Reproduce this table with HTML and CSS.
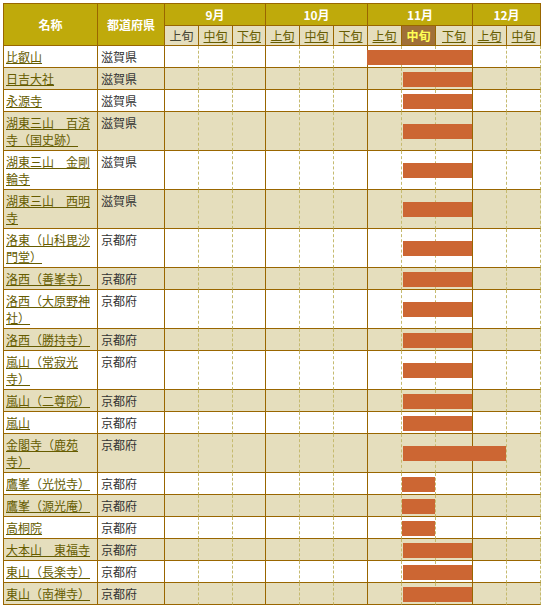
FILE: index.html
```html
<!DOCTYPE html>
<html lang="ja">
<head>
<meta charset="utf-8">
<title>紅葉見頃</title>
<link rel="stylesheet" href="styles.css">
</head>
<body>
<table class="koyo">
<colgroup>
<col class="c-name"><col class="c-pref">
<col class="c-34"><col class="c-34"><col class="c-33">
<col class="c-34"><col class="c-34"><col class="c-34">
<col class="c-34"><col class="c-34"><col class="c-37">
<col class="c-34"><col class="c-34">
</colgroup>
<thead>
<tr class="h1">
<th rowspan="2">名称</th><th rowspan="2">都道府県</th>
<th colspan="3">9月</th><th colspan="3">10月</th><th colspan="3">11月</th><th colspan="2">12月</th>
</tr>
<tr class="h2">
<th>上旬</th><th><a href="#">中旬</a></th><th><a href="#">下旬</a></th>
<th><a href="#">上旬</a></th><th><a href="#">中旬</a></th><th><a href="#">下旬</a></th>
<th><a href="#">上旬</a></th><th class="now">中旬</th><th><a href="#">下旬</a></th>
<th><a href="#">上旬</a></th><th><a href="#">中旬</a></th>
</tr>
</thead>
<tbody>
<tr><td class="nm"><a href="#">比叡山</a></td><td class="pf">滋賀県</td><td class="d1"></td><td class="d2"></td><td class="d3"></td><td class="d1"></td><td class="d2"></td><td class="d3"></td><td class="d1 st"><span class="bar b-jo3"></span></td><td class="d2"></td><td class="d3"></td><td class="d1"></td><td class="d2"></td></tr>
<tr class="alt"><td class="nm"><a href="#">日吉大社</a></td><td class="pf">滋賀県</td><td class="d1"></td><td class="d2"></td><td class="d3"></td><td class="d1"></td><td class="d2"></td><td class="d3"></td><td class="d1"></td><td class="d2 st"><span class="bar b-chu2"></span></td><td class="d3"></td><td class="d1"></td><td class="d2"></td></tr>
<tr><td class="nm"><a href="#">永源寺</a></td><td class="pf">滋賀県</td><td class="d1"></td><td class="d2"></td><td class="d3"></td><td class="d1"></td><td class="d2"></td><td class="d3"></td><td class="d1"></td><td class="d2 st"><span class="bar b-chu2"></span></td><td class="d3"></td><td class="d1"></td><td class="d2"></td></tr>
<tr class="alt"><td class="nm"><a href="#">湖東三山　百済寺（国史跡）</a></td><td class="pf">滋賀県</td><td class="d1"></td><td class="d2"></td><td class="d3"></td><td class="d1"></td><td class="d2"></td><td class="d3"></td><td class="d1"></td><td class="d2 st"><span class="bar b-chu2"></span></td><td class="d3"></td><td class="d1"></td><td class="d2"></td></tr>
<tr><td class="nm"><a href="#">湖東三山　金剛輪寺</a></td><td class="pf">滋賀県</td><td class="d1"></td><td class="d2"></td><td class="d3"></td><td class="d1"></td><td class="d2"></td><td class="d3"></td><td class="d1"></td><td class="d2 st"><span class="bar b-chu2"></span></td><td class="d3"></td><td class="d1"></td><td class="d2"></td></tr>
<tr class="alt"><td class="nm"><a href="#">湖東三山　西明寺</a></td><td class="pf">滋賀県</td><td class="d1"></td><td class="d2"></td><td class="d3"></td><td class="d1"></td><td class="d2"></td><td class="d3"></td><td class="d1"></td><td class="d2 st"><span class="bar b-chu2"></span></td><td class="d3"></td><td class="d1"></td><td class="d2"></td></tr>
<tr><td class="nm"><a href="#">洛東（山科毘沙門堂）</a></td><td class="pf">京都府</td><td class="d1"></td><td class="d2"></td><td class="d3"></td><td class="d1"></td><td class="d2"></td><td class="d3"></td><td class="d1"></td><td class="d2 st"><span class="bar b-chu2"></span></td><td class="d3"></td><td class="d1"></td><td class="d2"></td></tr>
<tr class="alt"><td class="nm"><a href="#">洛西（善峯寺）</a></td><td class="pf">京都府</td><td class="d1"></td><td class="d2"></td><td class="d3"></td><td class="d1"></td><td class="d2"></td><td class="d3"></td><td class="d1"></td><td class="d2 st"><span class="bar b-chu2"></span></td><td class="d3"></td><td class="d1"></td><td class="d2"></td></tr>
<tr><td class="nm"><a href="#">洛西（大原野神社）</a></td><td class="pf">京都府</td><td class="d1"></td><td class="d2"></td><td class="d3"></td><td class="d1"></td><td class="d2"></td><td class="d3"></td><td class="d1"></td><td class="d2 st"><span class="bar b-chu2"></span></td><td class="d3"></td><td class="d1"></td><td class="d2"></td></tr>
<tr class="alt"><td class="nm"><a href="#">洛西（勝持寺）</a></td><td class="pf">京都府</td><td class="d1"></td><td class="d2"></td><td class="d3"></td><td class="d1"></td><td class="d2"></td><td class="d3"></td><td class="d1"></td><td class="d2 st"><span class="bar b-chu2"></span></td><td class="d3"></td><td class="d1"></td><td class="d2"></td></tr>
<tr><td class="nm"><a href="#">嵐山（常寂光寺）</a></td><td class="pf">京都府</td><td class="d1"></td><td class="d2"></td><td class="d3"></td><td class="d1"></td><td class="d2"></td><td class="d3"></td><td class="d1"></td><td class="d2 st"><span class="bar b-chu2"></span></td><td class="d3"></td><td class="d1"></td><td class="d2"></td></tr>
<tr class="alt"><td class="nm"><a href="#">嵐山（二尊院）</a></td><td class="pf">京都府</td><td class="d1"></td><td class="d2"></td><td class="d3"></td><td class="d1"></td><td class="d2"></td><td class="d3"></td><td class="d1"></td><td class="d2 st"><span class="bar b-chu2"></span></td><td class="d3"></td><td class="d1"></td><td class="d2"></td></tr>
<tr><td class="nm"><a href="#">嵐山</a></td><td class="pf">京都府</td><td class="d1"></td><td class="d2"></td><td class="d3"></td><td class="d1"></td><td class="d2"></td><td class="d3"></td><td class="d1"></td><td class="d2 st"><span class="bar b-chu2"></span></td><td class="d3"></td><td class="d1"></td><td class="d2"></td></tr>
<tr class="alt"><td class="nm"><a href="#">金閣寺（鹿苑寺）</a></td><td class="pf">京都府</td><td class="d1"></td><td class="d2"></td><td class="d3"></td><td class="d1"></td><td class="d2"></td><td class="d3"></td><td class="d1"></td><td class="d2 st"><span class="bar b-chu3"></span></td><td class="d3"></td><td class="d1"></td><td class="d2"></td></tr>
<tr><td class="nm"><a href="#">鷹峯（光悦寺）</a></td><td class="pf">京都府</td><td class="d1"></td><td class="d2"></td><td class="d3"></td><td class="d1"></td><td class="d2"></td><td class="d3"></td><td class="d1"></td><td class="d2 st"><span class="bar b-chu1"></span></td><td class="d3"></td><td class="d1"></td><td class="d2"></td></tr>
<tr class="alt"><td class="nm"><a href="#">鷹峯（源光庵）</a></td><td class="pf">京都府</td><td class="d1"></td><td class="d2"></td><td class="d3"></td><td class="d1"></td><td class="d2"></td><td class="d3"></td><td class="d1"></td><td class="d2 st"><span class="bar b-chu1"></span></td><td class="d3"></td><td class="d1"></td><td class="d2"></td></tr>
<tr><td class="nm"><a href="#">高桐院</a></td><td class="pf">京都府</td><td class="d1"></td><td class="d2"></td><td class="d3"></td><td class="d1"></td><td class="d2"></td><td class="d3"></td><td class="d1"></td><td class="d2 st"><span class="bar b-chu1"></span></td><td class="d3"></td><td class="d1"></td><td class="d2"></td></tr>
<tr class="alt"><td class="nm"><a href="#">大本山　東福寺</a></td><td class="pf">京都府</td><td class="d1"></td><td class="d2"></td><td class="d3"></td><td class="d1"></td><td class="d2"></td><td class="d3"></td><td class="d1"></td><td class="d2 st"><span class="bar b-chu2"></span></td><td class="d3"></td><td class="d1"></td><td class="d2"></td></tr>
<tr><td class="nm"><a href="#">東山（長楽寺）</a></td><td class="pf">京都府</td><td class="d1"></td><td class="d2"></td><td class="d3"></td><td class="d1"></td><td class="d2"></td><td class="d3"></td><td class="d1"></td><td class="d2 st"><span class="bar b-chu2"></span></td><td class="d3"></td><td class="d1"></td><td class="d2"></td></tr>
<tr class="alt"><td class="nm"><a href="#">東山（南禅寺）</a></td><td class="pf">京都府</td><td class="d1"></td><td class="d2"></td><td class="d3"></td><td class="d1"></td><td class="d2"></td><td class="d3"></td><td class="d1"></td><td class="d2 st"><span class="bar b-chu2"></span></td><td class="d3"></td><td class="d1"></td><td class="d2"></td></tr>
</tbody>
</table>
</body>
</html>
```

FILE: styles.css
```css
html {
  overflow: hidden;
}

body {
  margin: 3px;
  background: #ffffff;
  color: #333333;
  font-family: "Noto Sans CJK JP", "DejaVu Sans", sans-serif;
  font-size: 12px;
  line-height: 17px;
}

.koyo {
  border-collapse: separate;
  border-spacing: 0;
  table-layout: fixed;
  width: 538px;
  border-top: 1px solid #996600;
  border-left: 1px solid #996600;
}

.c-name { width: 94px; }
.c-pref { width: 67px; }
.c-33 { width: 33px; }
.c-34 { width: 34px; }
.c-37 { width: 37px; }

.koyo th,
.koyo td {
  border-right: 1px solid #996600;
  border-bottom: 1px solid #996600;
  padding: 2px;
}

.koyo a {
  color: #665c00;
  text-decoration: underline;
}

.h1 th {
  background: #bfaa0b;
  color: #ffffff;
  font-weight: bold;
  text-align: center;
  vertical-align: middle;
}

.h2 th {
  background: #e5debd;
  color: #444433;
  font-weight: normal;
  text-align: center;
  padding: 1px 0;
}

.h2 th.now {
  background: #a07038;
  color: #ffff55;
  font-weight: bold;
}

.koyo tbody td {
  vertical-align: top;
  background: #ffffff;
}

.koyo tbody tr.alt td {
  background: #e5debd;
}

.koyo td.nm {
  padding: 2px 3px 2px 2px;
}

.koyo td.pf {
  padding: 2px 3px;
}

.koyo td.d1,
.koyo td.d2 {
  border-right: 1px dashed #c5ba6e;
  padding: 0;
}

.koyo td.d3 {
  padding: 0;
}

.koyo td.st {
  position: relative;
}

.bar {
  position: absolute;
  z-index: 1;
  top: calc(50% - 7px);
  height: 15px;
  background: #cc6633;
}

.b-jo3 { left: -1px; width: 105px; }
.b-chu2 { left: 1px; width: 69px; }
.b-chu3 { left: 1px; width: 103px; }
.b-chu1 { left: 0; width: 33px; }
```
